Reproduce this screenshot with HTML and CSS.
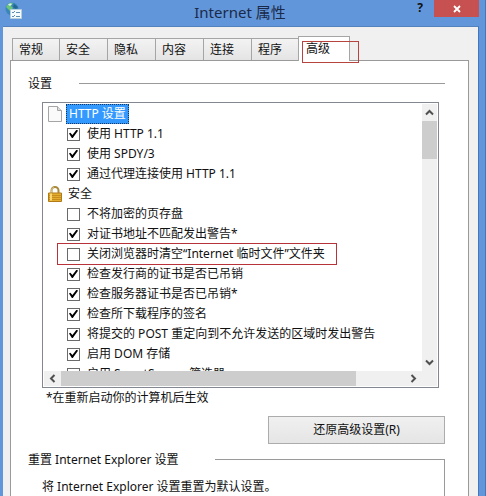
FILE: index.html
```html
<!DOCTYPE html>
<html lang="zh-CN">
<head><meta charset="UTF-8">
<meta name="viewport" content="width=device-width,initial-scale=1.0">
<title>Internet 属性</title>
<link rel="stylesheet" href="styles.css">
</head>
<body>

<div class="window">
  <header class="titlebar">
    <svg class="app-icon" width="17" height="17" viewBox="0 0 17 17">
      <circle cx="7" cy="7" r="6.5" fill="#3a86b8"/>
      <path d="M1 5C3 1 6 0 8 1L6 4 8 6 5 9 3 7z" fill="#6cc47a"/>
      <path d="M9 2l4 3-2 2-3-2z" fill="#22678f"/>
      <path d="M3 2.500Q5 1 7 2L5 4z" fill="#d6f2ee"/>
      <path d="M5.500 7.500h11v9h-11z" fill="#f5fafc" stroke="#b7cedd"/>
      <path d="M7 10l1 1 2-2M7 14l1 1 2-2M11 10.500h4M11 14.500h4" fill="none" stroke="#5d8fb5"/>
    </svg>
    <h1 class="title">Internet 属性</h1>
    <button class="help-btn" type="button" aria-label="帮助">?</button>
    <button class="close-btn" type="button" aria-label="关闭">
      <svg width="8" height="8" viewBox="0 0 8 8"><path d="M1 1l6 6M7 1L1 7" stroke="#fff" stroke-width="1.800"/></svg>
    </button>
  </header>

  <main class="client">
    <nav class="tabs" role="tablist">
      <button class="tab" role="tab" type="button">常规</button>
      <button class="tab" role="tab" type="button">安全</button>
      <button class="tab" role="tab" type="button">隐私</button>
      <button class="tab" role="tab" type="button">内容</button>
      <button class="tab" role="tab" type="button">连接</button>
      <button class="tab" role="tab" type="button">程序</button>
      <button class="tab active" role="tab" type="button" aria-selected="true">高级</button>
    </nav>

    <section class="panel">
      <div class="group-head">
        <h2>设置</h2>
        <span class="rule"></span>
      </div>

      <div class="listbox">
        <div class="list">
          <div class="category">
            <svg width="14" height="16" viewBox="0 0 14 16"><path d="M.5.5h9l4 4v11H.5z" fill="#fafafa" stroke="#a5a5a5"/><path d="M9.500.5v4h4" fill="#ddd" stroke="#a5a5a5"/></svg>
            <span class="selected">HTTP 设置</span>
          </div>
          <label class="option"><input type="checkbox" checked>使用 HTTP 1.1</label>
          <label class="option"><input type="checkbox" checked>使用 SPDY/3</label>
          <label class="option"><input type="checkbox" checked>通过代理连接使用 HTTP 1.1</label>
          <div class="category">
            <svg width="14" height="16" viewBox="0 0 14 16">
              <path d="M3.500 8V4.500a3.500 3.500 0 0 1 7 0V8" fill="none" stroke="#a98a3a" stroke-width="2"/>
              <path d="M3.500 7V4.500A3 3 0 0 1 6 1.500" fill="none" stroke="#dcc88c"/>
              <path d="M.5 7h13v8.500H.5z" fill="#e5ad2e" stroke="#b17a18"/>
              <path d="M1 9.500h12M1 11.500h12M1 13.500h12" stroke="#c68b1d"/>
              <path d="M3 7.500v7" stroke="#f8d774" stroke-width="2"/>
            </svg>
            <span>安全</span>
          </div>
          <label class="option"><input type="checkbox">不将加密的页存盘</label>
          <label class="option"><input type="checkbox" checked>对证书地址不匹配发出警告*</label>
          <label class="option marked"><input type="checkbox">关闭浏览器时清空“Internet 临时文件”文件夹</label>
          <label class="option"><input type="checkbox" checked>检查发行商的证书是否已吊销</label>
          <label class="option"><input type="checkbox" checked>检查服务器证书是否已吊销*</label>
          <label class="option"><input type="checkbox" checked>检查所下载程序的签名</label>
          <label class="option"><input type="checkbox" checked>将提交的 POST 重定向到不允许发送的区域时发出警告</label>
          <label class="option"><input type="checkbox" checked>启用 DOM 存储</label>
          <label class="option"><input type="checkbox">启用 SmartScreen 筛选器</label>
        </div>

        <div class="scroll-y">
          <button type="button" aria-label="向上滚动"><svg width="9" height="7" viewBox="0 0 9 7"><path d="M1 5.500l3.500-3.500L8 5.500"/></svg></button>
          <div class="thumb"></div>
          <button class="end" type="button" aria-label="向下滚动"><svg width="9" height="7" viewBox="0 0 9 7"><path d="M1 1.500L4.500 5 8 1.500"/></svg></button>
        </div>
        <div class="scroll-x">
          <button type="button" aria-label="向左滚动"><svg width="7" height="9" viewBox="0 0 7 9"><path d="M5.500 1L2 4.500 5.500 8"/></svg></button>
          <div class="thumb"></div>
          <button class="end" type="button" aria-label="向右滚动"><svg width="7" height="9" viewBox="0 0 7 9"><path d="M1.500 1L5 4.500 1.500 8"/></svg></button>
        </div>
      </div>

      <p class="note">*在重新启动你的计算机后生效</p>
      <button class="restore-btn" type="button">还原高级设置(R)</button>

      <div class="group-head reset-head">
        <h2>重置 Internet Explorer 设置</h2>
        <span class="rule"></span>
      </div>
      <div class="reset-body">
        <p>将 Internet Explorer 设置重置为默认设置。</p>
      </div>
    </section>
  </main>
</div>

</body>
</html>
```

FILE: styles.css
```css
*,*::before,*::after{box-sizing:border-box;margin:0;padding:0}
body{
  height:100vh;
  overflow:hidden;
  font-family:'Noto Sans','Noto Sans CJK SC',sans-serif;
  font-size:12px;
  line-height:20px;
  color:#111;
}
button{font:inherit;color:inherit;border:0;background:none}
h1,h2{font-size:inherit;font-weight:400}

/* === WINDOW === */
.window{
  height:100vh;
  display:flex;
  flex-direction:column;
  padding:0 6px 0 3px;
  background:#6296da;
  border-right:1px solid #4377bd;
}
.titlebar{
  flex:none;
  height:26px;
  display:flex;
  align-items:flex-start;
  padding-left:2px;
}
.app-icon{margin-top:2px}
.title{
  flex:1;
  padding-left:52px;
  text-align:center;
  font-size:15px;
  line-height:24px;
  color:#1b2a48;
}
.help-btn{
  width:28px;
  line-height:16px;
  font-weight:700;
  font-size:12px;
}
.close-btn{
  width:45px;
  height:17px;
  display:flex;
  align-items:center;
  justify-content:center;
  background:#c75050;
}
.client{
  flex:1;
  min-height:0;
  display:flex;
  flex-direction:column;
  padding:9px 9px 0 7px;
  background:#f0f0f0;
  border-top:1px solid #5482bd;
  border-right:1px solid #4377bd;
}

/* === TABS === */
.tabs{
  display:flex;
  align-items:flex-end;
  height:24px;
  padding-left:2px;
}
.tab{
  width:48px;
  height:22px;
  padding-left:6px;
  text-align:left;
  border:1px solid #a5a5a5;
  border-width:1px 1px 0;
  background:linear-gradient(#f3f3f3,#e4e4e4);
}
.tab + .tab{border-left-width:0}
.tab.active{
  position:relative;
  width:52px;
  height:25px;
  margin:0 0 -1px -2px;
  padding-left:7px;
  border-left-width:1px;
  background:#fff;
}
/* red frame over the active tab */
.tab.active::after{
  content:"";
  position:absolute;
  top:4px;
  left:3px;
  width:57px;
  height:22px;
  border:1px solid #b8443f;
}

/* === PANEL === */
.panel{
  flex:1;
  min-height:0;
  display:flex;
  flex-direction:column;
  padding:13px 23px 0 17px;
  background:#fff;
  border:1px solid #9a9a9a;
  border-bottom:0;
}
.group-head{display:flex;gap:27px}
.rule{
  flex:1;
  height:11px;
  align-self:flex-end;
  border-top:1px solid #9a9a9a;
}

/* === LIST === */
.listbox{
  flex:none;
  height:286px;
  display:grid;
  grid-template:1fr 15px / 1fr 15px;
  margin:8px 6px 0 14px;
  padding:1px;
  border:1px solid #828790;
}
.list{
  min-width:0;
  overflow:hidden;
  padding-left:4px;
  white-space:nowrap;
}
.category,.option{
  display:flex;
  align-items:center;
  height:20px;
}
.category{gap:6px}
.selected{
  height:20px;
  margin-left:-2px;
  padding:0 2px;
  line-height:18px;
  color:#fff;
  background:#3399ff;
  border:1px dotted #16365c;
}
.option{gap:7px;padding-left:19px}
.option.marked{
  width:280px;
  height:22px;
  margin:-1px 0 -1px 9px;
  padding-left:9px;
  border:1px solid #b8323a;
}
.option input{
  appearance:none;
  flex:none;
  width:13px;
  height:13px;
  border:1px solid #6a6a6a;
  background:#fff;
}
.option input:checked::before{
  content:"";
  display:block;
  width:9px;
  height:9px;
  margin:1px;
  background:#000;
  clip-path:polygon(0 45%,15% 35%,38% 60%,85% 0,100% 14%,42% 95%,32% 95%);
}

/* === SCROLLBARS === */
.scroll-y,.scroll-x{display:flex;background:#f0f0f0}
.scroll-y{flex-direction:column}
.scroll-x{grid-column:1 / 3;padding-right:15px}
.scroll-y button,.scroll-x button{
  flex:none;
  width:17px;
  height:17px;
  display:flex;
  align-items:center;
  justify-content:center;
}
.scroll-y button{width:15px}
.scroll-x button{height:15px}
.scroll-y .thumb{height:38px;background:#cdcdcd}
.scroll-x .thumb{width:78%;background:#cdcdcd}
.scroll-y .end{margin-top:auto}
.scroll-x .end{margin-left:auto}
.scroll-y path,.scroll-x path{fill:none;stroke:#505050;stroke-width:2}

/* === BELOW THE LIST === */
.note{padding-left:18px}
.restore-btn{
  flex:none;
  align-self:flex-end;
  width:177px;
  height:28px;
  margin-top:8px;
  border:1px solid #acacac;
  background:linear-gradient(#f0f0f0,#e5e5e5);
}
.reset-head{gap:36px;margin-top:6px}
.reset-head .rule,.reset-body{border-right:1px solid #9a9a9a}
.reset-body{
  flex:1;
  padding:7px 0 0 14px;
}
```
